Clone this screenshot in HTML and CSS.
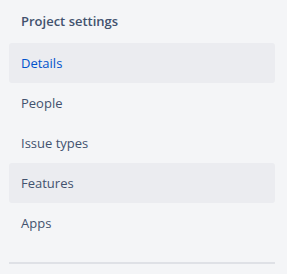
FILE: index.html
```html
<!DOCTYPE html>
<html>
<head>
<meta charset="utf-8">
<link rel="stylesheet" href="styles.css">
</head>
<body>
<nav class="sidebar">
  <div class="heading">Project settings</div>
  <ul class="menu">
    <li class="item selected">Details</li>
    <li class="item">People</li>
    <li class="item">Issue types</li>
    <li class="item hovered">Features</li>
    <li class="item">Apps</li>
  </ul>
  <div class="divider"></div>
</nav>
</body>
</html>
```
FILE: styles.css
```css
html, body {
  margin: 0;
  padding: 0;
  background: #f4f5f7;
}
body {
  font-family: "Open Sans", "Noto Sans", sans-serif;
  width: 287px;
  height: 274px;
  overflow: hidden;
}
.sidebar {
  padding: 0 12px 0 9px;
}
.heading {
  height: 43px;
  box-sizing: border-box;
  padding: 12px 0 0 12px;
  font-size: 13px;
  font-weight: 600;
  color: #42526e;
  line-height: 18px;
}
.menu {
  list-style: none;
  margin: 0;
  padding: 0;
}
.item {
  height: 40px;
  display: flex;
  align-items: center;
  padding: 0 12px;
  font-size: 13px;
  color: #42526e;
  border-radius: 3px;
}
.item.selected {
  background: #ebecf0;
  color: #0052cc;
}
.item.hovered {
  background: #ebecf0;
}
.divider {
  margin-top: 19px;
  height: 2px;
  background: #dfe1e6;
}
```
